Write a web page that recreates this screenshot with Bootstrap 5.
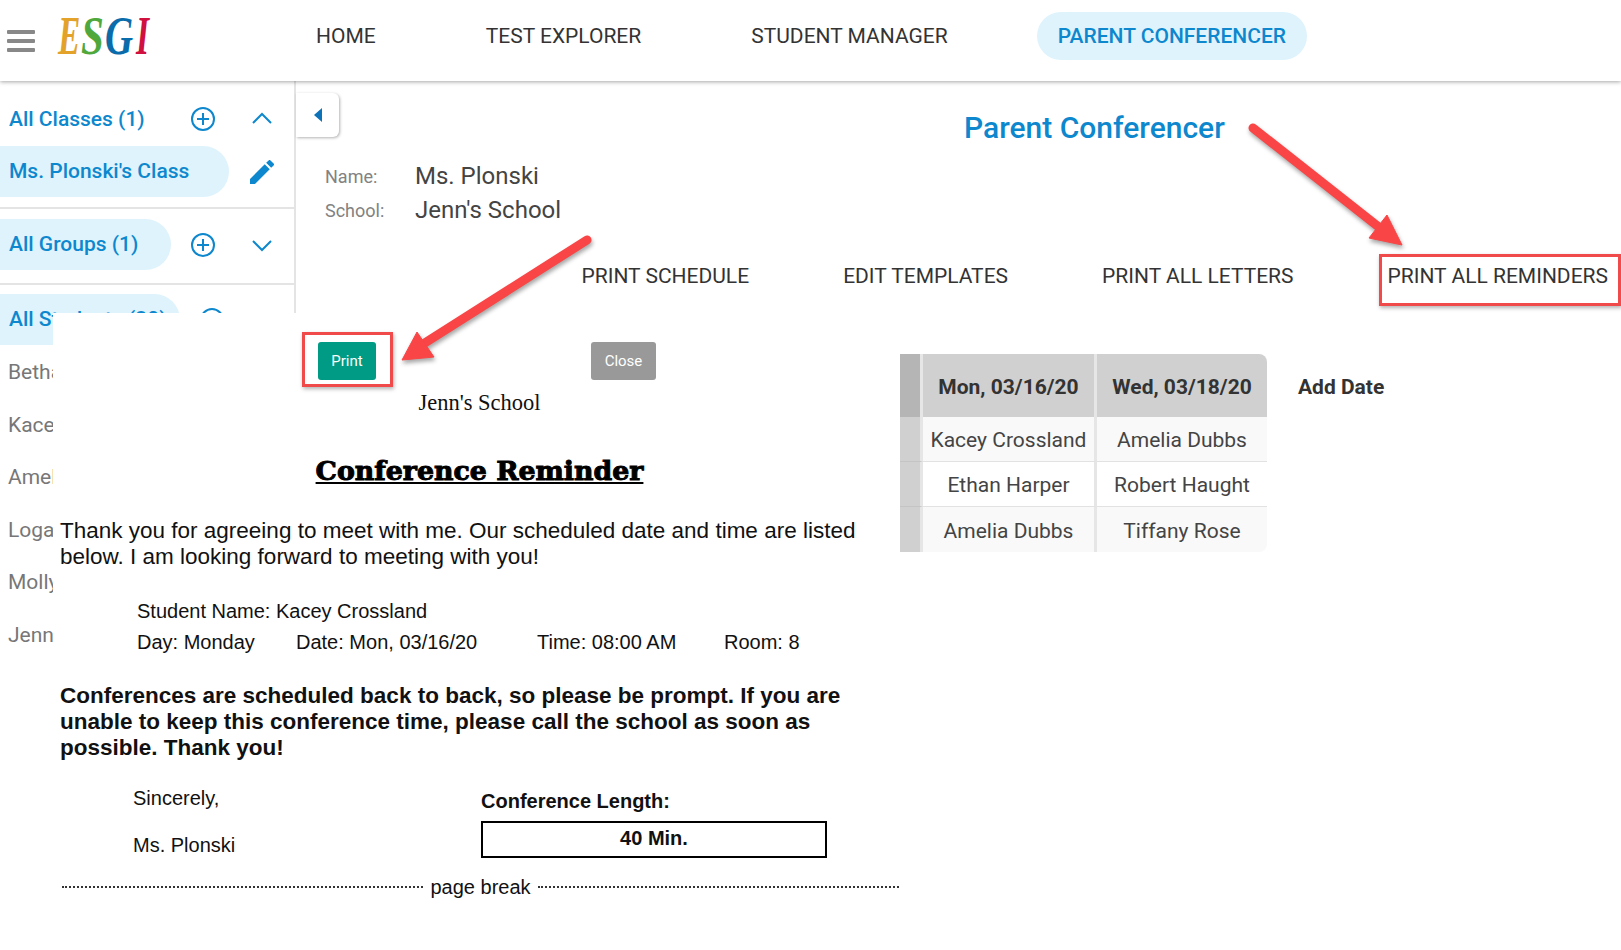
<!DOCTYPE html>
<html lang="en">
<head>
  <meta charset="UTF-8" />
  <meta name="viewport" content="width=device-width, initial-scale=1.0"/>
  <title>Parent Conferencer - ESGI</title>
  <link href="https://cdn.jsdelivr.net/npm/bootstrap@5.3.3/dist/css/bootstrap.min.css" rel="stylesheet">
  <style>
    body {
      position: relative;
      width: 1621px;
      height: 950px;
      overflow: hidden;
      font-family: Roboto, sans-serif;
      color: #333;
      background: #fff;
    }

    /* top bar */
    .top-bar {
      height: 81px;
      padding-bottom: 9px;
      background: #fff;
      box-shadow: 0 1px 4px rgba(0,0,0,0.35);
      position: relative;
      z-index: 2;
    }
    .brand-box { width: 295px; padding-left: 7px; }
    .burger { width: 28px; display: flex; flex-direction: column; gap: 5px; margin-top: 10px; }
    .burger i { display: block; height: 4px; background: #888; border-radius: 1px; }
    .brand-logo { margin-left: 21px; }
    .brand-logo text { font-family: "Liberation Serif", serif; font-weight: 700; font-style: italic; font-size: 54px; }
    .top-link {
      font-size: 21px;
      line-height: 47px;
      padding: 1px 21px 0;
      margin-right: 68px;
      color: #333;
      border-radius: 24px;
    }
    .top-link.active { background: #dff3fd; color: #0d87cd; font-weight: 500; }

    /* sidebar */
    .side-col { width: 296px; height: 869px; flex: none; border-right: 2px solid #e4e4e4; }
    .side-block { border-bottom: 2px solid #e4e4e4; }
    .block-classes { padding: 12px 0 10px; }
    .block-groups { padding: 10px 0 13px; }
    .block-students { padding-top: 9px; }
    .side-row { height: 51px; padding-left: 9px; font-size: 21px; font-weight: 500; color: #0d87cd; }
    .side-row + .side-row { margin-top: 2px; }
    .side-text { width: 182px; padding-top: 2px; }
    .side-pill { background: #dff3fd; border-radius: 0 26px 26px 0; margin-left: -9px; padding: 1px 0 0 9px; height: 51px; }
    .pill-class { width: 229px; }
    .pill-group { width: 171px; }
    .pill-student { width: 180px; }
    .names-list { margin-top: 1px; }
    .side-name { padding-left: 8px; font-size: 21px; line-height: 52.6px; color: #777; white-space: nowrap; }
    .ico-slot { width: 24px; height: 24px; flex: none; }
    .ico-plus { margin-left: 20px; }
    .ico-first { margin-left: 0; }
    .ico-chev { margin-left: 35px; }
    .ico-pen { margin-left: 21px; }

    /* main */
    .main-col { flex: 1 1 auto; min-width: 0; }
    .collapse-tab {
      width: 43px;
      height: 44px;
      margin-top: 12px;
      border-radius: 0 6px 6px 0;
      box-shadow: 1px 1px 3px rgba(0,0,0,0.3);
    }
    .page-title { margin: 29px 0 0 625px; font-size: 30px; line-height: 36px; font-weight: 500; color: #0d87cd; }
    .teacher-info { padding: 13px 0 0 29px; height: 77px; }
    .info-line { height: 34px; }
    .info-label { width: 90px; font-size: 18px; color: #828282; }
    .info-value { font-size: 24px; color: #444; }
    .action-row { padding-top: 31px; gap: 76px; }
    .act-btn {
      height: 52px;
      padding: 0 6px 9px;
      font-size: 21px;
      line-height: 36px;
      color: #333;
      border: 3px solid transparent;
      border-radius: 0;
      white-space: nowrap;
      background: none;
    }
    .act-btn:last-child { padding-right: 10px; }
    .red-box { border: 3px solid #f04a4a; box-shadow: 1px 2px 4px rgba(0,0,0,0.3); }
    .act-btn.red-box { border-color: #f04a4a; }

    /* letter over the page */
    .letter-layer {
      position: absolute;
      left: 53px;
      top: 313px;
      right: 0;
      bottom: 0;
      background: #fff;
      z-index: 3;
    }
    .letter-col { width: 847px; flex: none; padding: 19px 1px 0 7px; font-family: "Liberation Sans", Arial, sans-serif; color: #111; }
    .print-box { width: 91px; height: 55px; margin-left: 242px; padding: 7px 0 0 13px; }
    .print-btn, .close-btn {
      height: 38px;
      padding: 0;
      font-family: Roboto, sans-serif;
      font-size: 15px;
      color: #fff;
      border: 0;
      border-radius: 3px;
    }
    .print-btn { width: 58px; background: #009b84; }
    .close-btn { width: 65px; margin: 10px 0 0 198px; background: #999; }
    .letter-school { margin-top: 4px; font-family: "Liberation Serif", serif; font-size: 22.5px; line-height: 24px; text-align: center; }
    .letter-head {
      margin: 38px 0 0;
      font-family: "DejaVu Serif", serif;
      font-weight: 700;
      font-size: 26.8px;
      line-height: 36px;
      text-align: center;
      text-decoration: underline;
      color: #000;
      -webkit-text-stroke: 1px #000;
    }
    .letter-text { margin: 29px 0 0; font-size: 22.5px; line-height: 26px; }
    .letter-text.strong-text { margin-top: 26px; font-weight: 700; }
    .letter-details { margin-top: 26px; padding-left: 77px; font-size: 20px; line-height: 30px; }
    .day-line { margin-top: 1px; }
    .d-day { width: 159px; }
    .d-date { width: 241px; }
    .d-time { width: 187px; }
    .sign-row { margin-top: 25px; height: 89px; font-size: 20px; line-height: 24px; }
    .sign-left { width: 421px; padding-left: 73px; flex: none; }
    .sign-left div + div { margin-top: 23px; }
    .length-col { width: 346px; padding-top: 3px; font-weight: 700; }
    .length-box { height: 37px; margin-top: 8px; border: 2px solid #000; line-height: 30px; text-align: center; }
    .break-row { padding-left: 2px; font-size: 20px; line-height: 24px; }
    .break-rule { flex: 1 1 auto; border-top: 2px dotted #333; }
    .break-text { padding: 0 7px; }

    /* schedule */
    .sched-table { margin-top: 41px; width: 367px; height: 198px; border-collapse: separate; border-spacing: 0; font-size: 21px; align-self: flex-start; }
    .sched-table th, .sched-table td { text-align: center; padding: 4px 0 0; border-right: 3px solid #e6e6e6; }
    .sched-table th { height: 63px; padding-top: 5px; background: #d0d0d0; font-size: 21px; font-weight: 700; }
    .sched-table td { height: 45px; border-bottom: 1px solid #e2e2e2; color: #444; }
    .sched-table .time-cell { width: 23px; }
    .sched-table th.time-cell { background: #b5b5b5; }
    .sched-table td.time-cell { background: #d0d0d0; border-bottom-color: #c4c4c4; }
    .sched-table .date-cell { width: 174px; }
    .sched-table th:last-child, .sched-table td:last-child { border-right: 0; width: 170px; }
    .sched-table th:last-child { border-top-right-radius: 8px; }
    .sched-table tbody tr:nth-child(odd) td:not(.time-cell) { background: #f9f9f9; }
    .sched-table tr:last-child td { border-bottom: 0; }
    .sched-table tr:last-child td:last-child { border-bottom-right-radius: 8px; }
    .add-date { margin: 41px 0 0 31px; height: 67px; line-height: 67px; font-size: 21px; font-weight: 700; color: #333; }

    /* annotation arrows */
    .note-arrows { position: absolute; left: 0; top: 0; z-index: 4; pointer-events: none; filter: drop-shadow(1px 3px 2px rgba(0,0,0,0.35)); }
  </style>
</head>
<body>

  <nav class="top-bar d-flex align-items-center">
    <div class="brand-box d-flex align-items-center">
      <div class="burger"><i></i><i></i><i></i></div>
      <svg class="brand-logo" width="96" height="64" viewBox="0 0 96 64">
        <text transform="translate(2,50) scale(.62,1)" fill="#e3a32b">E</text>
        <text transform="translate(25,50) scale(.76,1)" fill="#4fa83c">S</text>
        <text transform="translate(49,50) scale(.72,1)" fill="#0b6cab">G</text>
        <text transform="translate(80,50) scale(.62,1)" fill="#d0103f">I</text>
      </svg>
    </div>
    <div class="nav">
      <a class="nav-link top-link" href="#">HOME</a>
      <a class="nav-link top-link" href="#">TEST EXPLORER</a>
      <a class="nav-link top-link" href="#">STUDENT MANAGER</a>
      <a class="nav-link top-link active" href="#">PARENT CONFERENCER</a>
    </div>
  </nav>

  <div class="d-flex">
    <aside class="side-col">
      <div class="side-block block-classes">
        <div class="side-row d-flex align-items-center">
          <span class="side-text">All Classes (1)</span>
          <svg class="ico-slot ico-first" viewBox="0 0 24 24" fill="none" stroke="#0d87cd" stroke-width="2"><circle cx="12" cy="12" r="11"/><path d="M12 6v12M6 12h12"/></svg>
          <svg class="ico-slot ico-chev" viewBox="0 0 24 24" fill="none" stroke="#0d87cd" stroke-width="2"><path d="M3 16l9-9 9 9"/></svg>
        </div>
        <div class="side-row d-flex align-items-center">
          <span class="side-pill pill-class d-flex align-items-center">Ms. Plonski's Class</span>
          <svg class="ico-slot ico-pen" viewBox="3 3 18 18" fill="#0d87cd"><path d="M3 17.25V21h3.75L17.81 9.94l-3.75-3.75L3 17.25zM20.71 7.04a1 1 0 0 0 0-1.41l-2.34-2.34a1 1 0 0 0-1.41 0l-1.83 1.83 3.75 3.75 1.83-1.83z"/></svg>
        </div>
      </div>
      <div class="side-block block-groups">
        <div class="side-row d-flex align-items-center">
          <span class="side-pill pill-group d-flex align-items-center">All Groups (1)</span>
          <svg class="ico-slot ico-plus" viewBox="0 0 24 24" fill="none" stroke="#0d87cd" stroke-width="2"><circle cx="12" cy="12" r="11"/><path d="M12 6v12M6 12h12"/></svg>
          <svg class="ico-slot ico-chev" viewBox="0 0 24 24" fill="none" stroke="#0d87cd" stroke-width="2"><path d="M3 8l9 9 9-9"/></svg>
        </div>
      </div>
      <div class="block-students">
        <div class="side-row d-flex align-items-center">
          <span class="side-pill pill-student d-flex align-items-center">All Students (30)</span>
          <svg class="ico-slot ico-plus" viewBox="0 0 24 24" fill="none" stroke="#0d87cd" stroke-width="2"><circle cx="12" cy="12" r="11"/><path d="M12 6v12M6 12h12"/></svg>
        </div>
        <div class="names-list">
          <div class="side-name">Bethany</div>
          <div class="side-name">Kacey</div>
          <div class="side-name">Amelia</div>
          <div class="side-name">Logan</div>
          <div class="side-name">Molly</div>
          <div class="side-name">Jennifer</div>
        </div>
      </div>
    </aside>

    <main class="main-col">
      <div class="d-flex align-items-start">
        <button class="btn collapse-tab d-flex align-items-center justify-content-center p-0" type="button" aria-label="Collapse">
          <svg width="10" height="14" viewBox="0 0 10 14" fill="#0d72b8"><path d="M9 0v14L1 7z"/></svg>
        </button>
        <h1 class="page-title">Parent Conferencer</h1>
      </div>
      <div class="teacher-info">
        <div class="info-line d-flex align-items-center"><span class="info-label">Name:</span><span class="info-value">Ms. Plonski</span></div>
        <div class="info-line d-flex align-items-center"><span class="info-label">School:</span><span class="info-value">Jenn's School</span></div>
      </div>
      <div class="action-row d-flex justify-content-end">
        <button class="btn act-btn" type="button">PRINT SCHEDULE</button>
        <button class="btn act-btn" type="button">EDIT TEMPLATES</button>
        <button class="btn act-btn" type="button">PRINT ALL LETTERS</button>
        <button class="btn act-btn red-box" type="button">PRINT ALL REMINDERS</button>
      </div>
    </main>
  </div>

  <section class="letter-layer d-flex">
    <div class="letter-col">
      <div class="d-flex align-items-start">
        <div class="print-box red-box"><button class="btn print-btn" type="button">Print</button></div>
        <button class="btn close-btn" type="button">Close</button>
      </div>
      <div class="letter-school">Jenn's School</div>
      <h2 class="letter-head">Conference Reminder</h2>
      <p class="letter-text">Thank you for agreeing to meet with me. Our scheduled date and time are listed below. I am looking forward to meeting with you!</p>
      <div class="letter-details">
        <div>Student Name: Kacey Crossland</div>
        <div class="day-line d-flex"><span class="d-day">Day: Monday</span><span class="d-date">Date: Mon, 03/16/20</span><span class="d-time">Time: 08:00 AM</span><span>Room: 8</span></div>
      </div>
      <p class="letter-text strong-text">Conferences are scheduled back to back, so please be prompt. If you are unable to keep this conference time, please call the school as soon as possible. Thank you!</p>
      <div class="sign-row d-flex">
        <div class="sign-left"><div>Sincerely,</div><div>Ms. Plonski</div></div>
        <div class="length-col">
          <div>Conference Length:</div>
          <div class="length-box">40 Min.</div>
        </div>
      </div>
      <div class="break-row d-flex align-items-center"><span class="break-rule"></span><span class="break-text">page break</span><span class="break-rule"></span></div>
    </div>

    <table class="sched-table">
      <thead>
        <tr><th class="time-cell"></th><th class="date-cell">Mon, 03/16/20</th><th>Wed, 03/18/20</th></tr>
      </thead>
      <tbody>
        <tr><td class="time-cell"></td><td class="date-cell">Kacey Crossland</td><td>Amelia Dubbs</td></tr>
        <tr><td class="time-cell"></td><td class="date-cell">Ethan Harper</td><td>Robert Haught</td></tr>
        <tr><td class="time-cell"></td><td class="date-cell">Amelia Dubbs</td><td>Tiffany Rose</td></tr>
      </tbody>
    </table>
    <div class="add-date">Add Date</div>
  </section>

  <svg class="note-arrows" width="1621" height="950" viewBox="0 0 1621 950">
    <g fill="#f94545" stroke="#f94545" stroke-linejoin="round">
      <path d="M1253 128L1380 228" stroke-width="9" stroke-linecap="round" fill="none"/>
      <path d="M1402 245L1387 215L1369 238z" stroke-width="1"/>
      <path d="M587 240L420 346" stroke-width="9" stroke-linecap="round" fill="none"/>
      <path d="M402 360L417 332L434 357z" stroke-width="1"/>
    </g>
  </svg>

  <script src="https://cdn.jsdelivr.net/npm/bootstrap@5.3.3/dist/js/bootstrap.bundle.min.js"></script>
</body>
</html>
